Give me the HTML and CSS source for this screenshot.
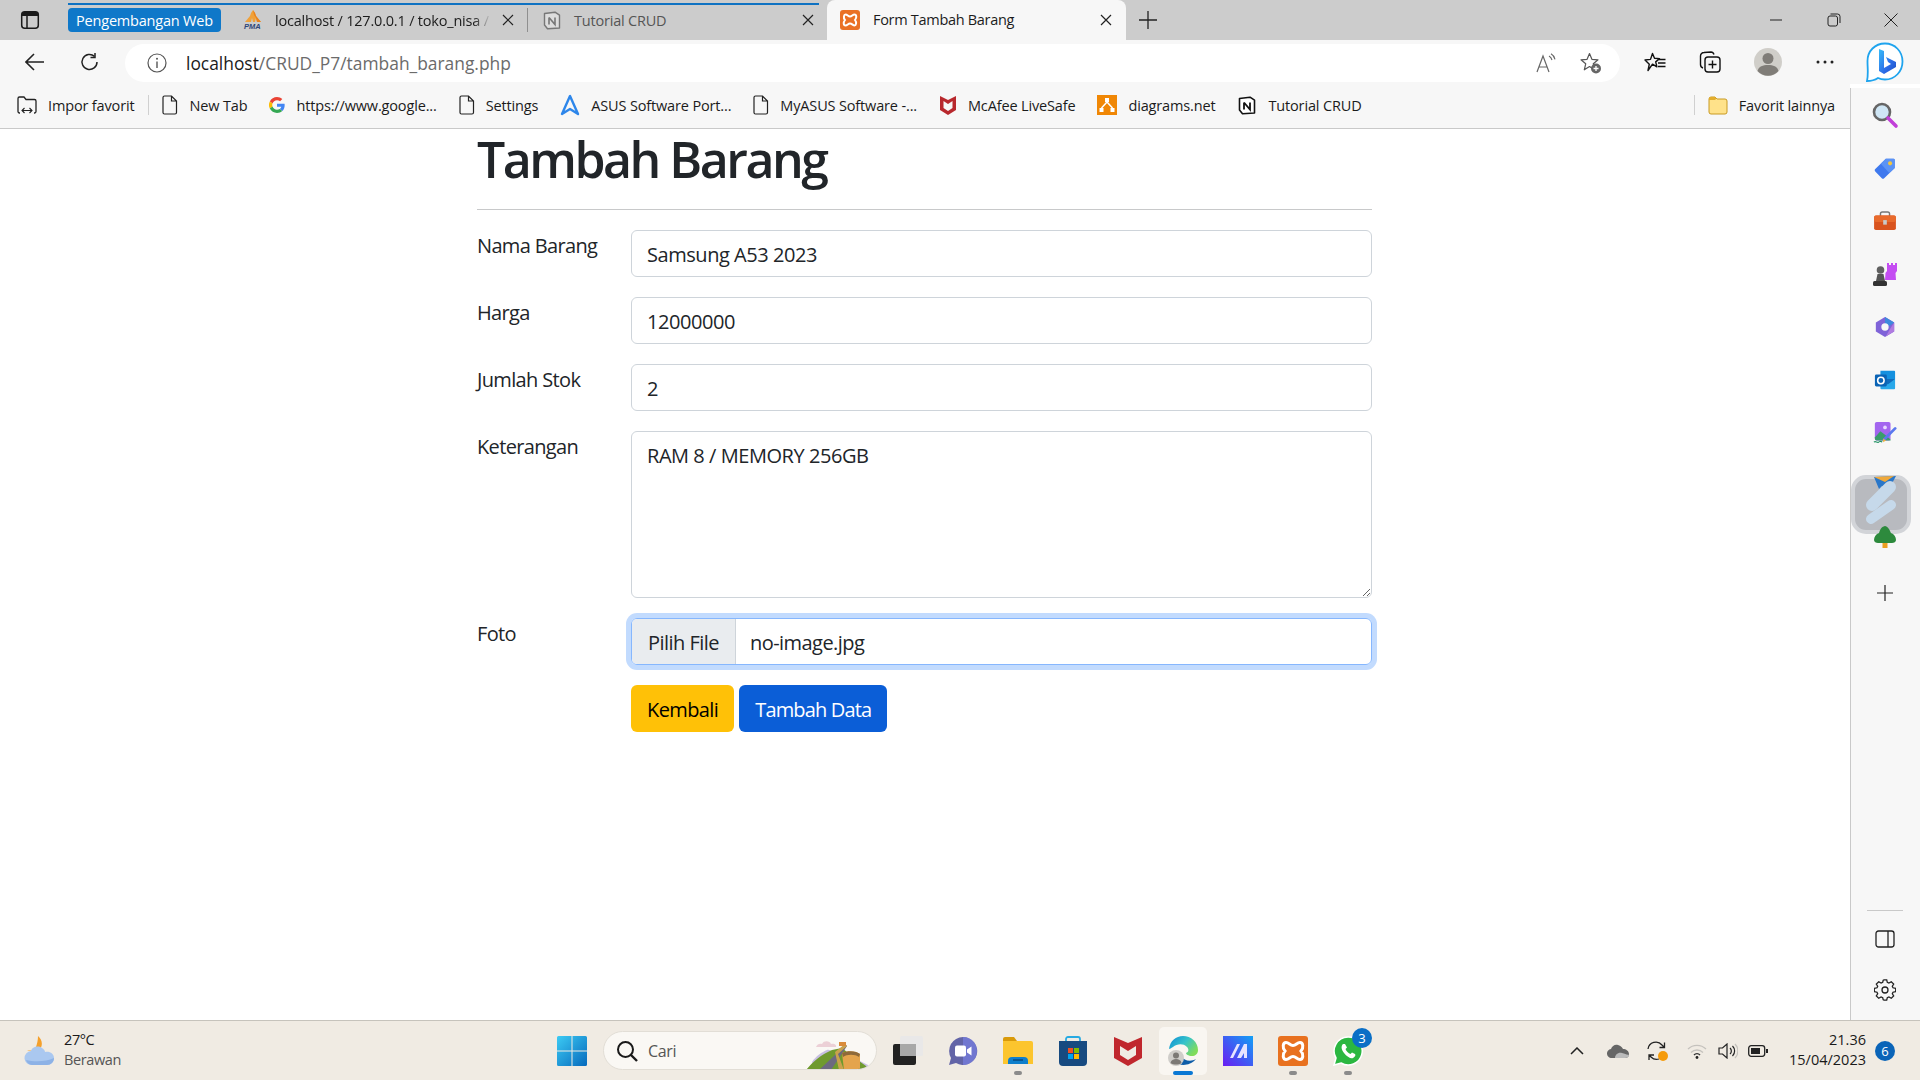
FILE: index.html
```html
<!DOCTYPE html>
<html lang="id">
<head>
<meta charset="utf-8">
<title>Form Tambah Barang</title>
<link rel="stylesheet" href="styles.css">
</head>
<body>
<div class="screen">
  <header class="tabbar">
    <div class="tab-toggle">
      <svg width="20" height="20" viewBox="0 0 20 20"><rect x="1.7" y="1.7" width="16.6" height="16.6" rx="3" fill="none" stroke="#1a1a1a" stroke-width="1.5"/><path d="M2 6V4a2 2 0 0 1 2-2h12a2 2 0 0 1 2 2v2z" fill="#1a1a1a"/><path d="M7 6v12" stroke="#1a1a1a" stroke-width="1.5"/></svg>
    </div>
    <div class="tab-group">
      <span class="group-chip">Pengembangan Web</span>
      <div class="tab tab-first">
        <svg class="fav" width="20" height="20" viewBox="0 0 20 20"><path d="M2 12L7 6l1-3 2-3 2 3 1 3 5 6h-4l-1-4-1 4h-2L9 8l-1 4z" fill="#f0a13a"/><path d="M10 0l2 3 1 3 5 6h-4l-1-4-2-3z" fill="#e9821c"/><text x="1" y="19" class="pma">PMA</text></svg>
        <span class="tab-title tab-fade">localhost / 127.0.0.1 / toko_nisa /</span>
        <svg class="close" width="12" height="12" viewBox="0 0 12 12"><path d="M1 1l10 10M11 1L1 11" stroke="#222" stroke-width="1.2"/></svg>
      </div>
      <div class="tab tab-second">
        <svg class="fav" width="20" height="20" viewBox="0 0 20 20"><path d="M2.5 3.5L13 2.2l4.5 3V18L5.5 18.8 2.5 15z" fill="#ddd" stroke="#777" stroke-width="1.4" stroke-linejoin="round"/><path d="M7 7.5v7M7 7.5l6 7v-7" fill="none" stroke="#777" stroke-width="1.6"/></svg>
        <span class="tab-title muted">Tutorial CRUD</span>
        <svg class="close" width="12" height="12" viewBox="0 0 12 12"><path d="M1 1l10 10M11 1L1 11" stroke="#222" stroke-width="1.2"/></svg>
      </div>
    </div>
    <div class="tab tab-active">
      <svg class="fav" width="20" height="20" viewBox="0 0 20 20"><rect width="20" height="20" rx="3" fill="#ea7125"/><path d="M5.5 4.5c2 0 2.500 2 4.500 2s2.500-2 4.500-2 2.500 3 .5 5.500c2 2.500 1 5.500-.5 5.500s-2.500-2-4.500-2-2.500 2-4.500 2-2.500-3-.5-5.500c-2-2.500-1-5.500.5-5.500z" fill="none" stroke="#fff" stroke-width="2"/></svg>
      <span class="tab-title">Form Tambah Barang</span>
      <svg class="close" width="12" height="12" viewBox="0 0 12 12"><path d="M1 1l10 10M11 1L1 11" stroke="#222" stroke-width="1.2"/></svg>
    </div>
    <svg class="newtab" width="18" height="18" viewBox="0 0 18 18"><path d="M9 0v18M0 9h18" stroke="#222" stroke-width="1.3"/></svg>
    <div class="winctl">
      <svg width="14" height="14" viewBox="0 0 14 14"><path d="M1 7h12" stroke="#222" stroke-width="1"/></svg>
      <svg width="14" height="14" viewBox="0 0 14 14"><rect x="1" y="3" width="9.500" height="10" rx="2" fill="none" stroke="#222"/><path d="M3.500 1h7a2.500 2.500 0 0 1 2.500 2.500V10" fill="none" stroke="#222"/></svg>
      <svg width="14" height="14" viewBox="0 0 14 14"><path d="M.5.5l13 13M13.500.5l-13 13" stroke="#222" stroke-width="1"/></svg>
    </div>
  </header>

  <div class="toolbar">
    <svg class="tool-back" width="20" height="18" viewBox="0 0 20 18"><path d="M9 1L1 9l8 8M1 9h18" fill="none" stroke="#222" stroke-width="1.6"/></svg>
    <svg class="tool-reload" width="20" height="20" viewBox="0 0 20 20"><path d="M17 10a7.500 7.500 0 1 1-2.500-5.600" fill="none" stroke="#222" stroke-width="1.500"/><path d="M15 1v4.500h-4.500" fill="none" stroke="#222" stroke-width="1.500"/></svg>
    <div class="address">
      <svg width="20" height="20" viewBox="0 0 20 20"><circle cx="10" cy="10" r="9" fill="none" stroke="#555" stroke-width="1.200"/><path d="M10 8.500V15" stroke="#555" stroke-width="1.400"/><circle cx="10" cy="5.800" r="1" fill="#555"/></svg>
      <span class="url"><span class="url-host">localhost</span>/CRUD_P7/tambah_barang.php</span>
      <svg class="addr-read" width="20" height="20" viewBox="0 0 20 20"><path d="M1 19L7 3l6 16M3 14h8" fill="none" stroke="#666" stroke-width="1.200"/><path d="M13 3c1.500.8 2.500 2.200 3 4M15 .8c2 1.200 3.500 3 4 5.500" fill="none" stroke="#666" stroke-width="1.100"/></svg>
      <svg class="addr-star" width="22" height="22" viewBox="0 0 22 22"><path d="M9.500 1.500l2.400 5.800 6.100.5-4.700 4 1.400 6-5.200-3.200-5.200 3.200 1.400-6L1 7.800l6.100-.5z" fill="none" stroke="#555" stroke-width="1.200" stroke-linejoin="round"/><circle cx="16" cy="16.500" r="5" fill="#666"/><path d="M16 14v5M13.500 16.500h5" stroke="#fff" stroke-width="1.300"/></svg>
    </div>
    <svg class="tool-favs" width="22" height="20" viewBox="0 0 22 20"><path d="M8.500 1.500l2 4.700 5 .4-3.800 3.300 1.200 5-4.400-2.700L4 18.500l1.300-6.300L1 8l5.500-.6z" fill="none" stroke="#111" stroke-width="1.400" stroke-linejoin="round"/><path d="M15 7.500h6.500M14 11h7.500M14 14.500h7.500" stroke="#111" stroke-width="1.300"/></svg>
    <svg class="tool-coll" width="22" height="22" viewBox="0 0 22 22"><path d="M4 17c-1.500-.5-2.500-2-2.500-3.500V5A3.500 3.500 0 0 1 5 1.500l7-.5c1.500 0 2.500 1 3 2.500" fill="none" stroke="#111" stroke-width="1.400"/><rect x="6" y="6" width="15" height="15" rx="3" fill="none" stroke="#111" stroke-width="1.400"/><path d="M13.500 9.500v8M9.500 13.500h8" stroke="#111" stroke-width="1.400"/></svg>
    <svg class="tool-profile" width="28" height="28" viewBox="0 0 28 28"><circle cx="14" cy="14" r="14" fill="#d0cec9"/><circle cx="14" cy="10.500" r="5.500" fill="#807d78"/><path d="M3.500 23c1-4.500 5.500-6 10.500-6s9.500 1.500 10.500 6a14 14 0 0 1-21 0z" fill="#807d78"/></svg>
    <svg class="tool-more" width="18" height="4" viewBox="0 0 18 4"><circle cx="2" cy="2" r="1.500" fill="#222"/><circle cx="9" cy="2" r="1.500" fill="#222"/><circle cx="16" cy="2" r="1.500" fill="#222"/></svg>
    <svg class="tool-bing" width="38" height="42" viewBox="0 0 38 42"><defs><linearGradient id="bingG" x1="0" y1="0" x2="1" y2="1"><stop offset="0" stop-color="#37bdf8"/><stop offset=".6" stop-color="#2c6ce8"/><stop offset="1" stop-color="#1e4ec2"/></linearGradient></defs><path d="M19 1.500C9 1.500 1.500 9 1.500 19c0 7 1 14-.5 20 4 0 8-1 11-3 2 1 4 1.500 7 1.500 10 0 17.500-8 17.500-18S29 1.500 19 1.500z" fill="#fff" stroke="#1fa4ee" stroke-width="1.800"/><path d="M13 7l5 2v17l7-4-3-2-2-5 10 5v5l-12 7-5-3z" fill="url(#bingG)"/></svg>
  </div>

  <div class="workspace">
    <div class="viewport">
      <nav class="bookmarks">
        <a class="bm"><svg width="20" height="20" viewBox="0 0 20 20"><path d="M3 18h-.5A1.500 1.500 0 0 1 1 16.500V3.500A1.500 1.500 0 0 1 2.500 2H7l2 2.500h8.500A1.500 1.500 0 0 1 19 6v10.500a1.500 1.500 0 0 1-1.500 1.500H17" fill="none" stroke="#222" stroke-width="1.300"/><path d="M5 15.500h10M7.500 13l-2.500 2.500L7.500 18M12.500 13l2.500 2.500-2.500 2.500" fill="none" stroke="#222" stroke-width="1.100"/></svg><span>Impor favorit</span></a>
        <i class="bm-sep"></i>
        <a class="bm"><svg width="16" height="20" viewBox="0 0 16 20"><path d="M2.500 1h7l5 5v11.500a1.500 1.500 0 0 1-1.500 1.500H2.500A1.500 1.500 0 0 1 1 17.500v-15A1.500 1.500 0 0 1 2.500 1zM9.500 1v5h5" fill="none" stroke="#222" stroke-width="1.200"/></svg><span>New Tab</span></a>
        <a class="bm"><svg width="16" height="16" viewBox="0 0 48 48"><path fill="#EA4335" d="M24 9.500c3.500 0 6.700 1.300 9.200 3.500l6.800-6.800C35.800 2.400 30.300 0 24 0 14.600 0 6.500 5.400 2.600 13.200l8 6.200C12.400 13.700 17.700 9.500 24 9.500z"/><path fill="#4285F4" d="M47 24.500c0-1.600-.1-3.100-.4-4.500H24v9h13c-.6 3-2.200 5.500-4.700 7.200l7.700 6C44.400 37.700 47 31.700 47 24.500z"/><path fill="#FBBC05" d="M10.500 28.600a14.500 14.500 0 0 1 0-9.200l-8-6.200a24 24 0 0 0 0 21.600z"/><path fill="#34A853" d="M24 48c6.500 0 11.900-2.100 15.900-5.800l-7.700-6c-2.200 1.500-5 2.300-8.200 2.300-6.300 0-11.600-4.200-13.500-9.900l-8 6.200C6.500 42.600 14.600 48 24 48z"/></svg><span>https://www.google...</span></a>
        <a class="bm"><svg width="16" height="20" viewBox="0 0 16 20"><path d="M2.500 1h7l5 5v11.500a1.500 1.500 0 0 1-1.500 1.500H2.500A1.500 1.500 0 0 1 1 17.500v-15A1.500 1.500 0 0 1 2.500 1zM9.500 1v5h5" fill="none" stroke="#222" stroke-width="1.200"/></svg><span>Settings</span></a>
        <a class="bm"><svg width="20" height="22" viewBox="0 0 20 22"><path d="M10 2L2 20l8-5 8 5z" fill="none" stroke="#2d86ea" stroke-width="2.400" stroke-linejoin="round"/></svg><span>ASUS Software Port...</span></a>
        <a class="bm"><svg width="16" height="20" viewBox="0 0 16 20"><path d="M2.500 1h7l5 5v11.500a1.500 1.500 0 0 1-1.500 1.500H2.500A1.500 1.500 0 0 1 1 17.500v-15A1.500 1.500 0 0 1 2.500 1zM9.500 1v5h5" fill="none" stroke="#222" stroke-width="1.200"/></svg><span>MyASUS Software -...</span></a>
        <a class="bm"><svg width="18" height="20" viewBox="0 0 18 20"><path d="M1 1l8 4 8-4v14l-8 5-8-5zM4.500 6v7l4.500 3 4.500-3V6L9 9z" fill="#b8282d" fill-rule="evenodd"/></svg><span>McAfee LiveSafe</span></a>
        <a class="bm"><svg width="20" height="20" viewBox="0 0 20 20"><rect width="20" height="20" fill="#f08705"/><path d="M8 3h4v4H8zM2.500 13h4v4h-4zM13.500 13h4v4h-4z" fill="#fff"/><path d="M10 7l-5.500 6M10 7l5.500 6" stroke="#fff" stroke-width="1.500"/></svg><span>diagrams.net</span></a>
        <a class="bm"><svg width="20" height="20" viewBox="0 0 20 20"><path d="M2.500 3.500L13 2.200l4.500 3V18L5.500 18.800 2.500 15z" fill="#fff" stroke="#111" stroke-width="1.600" stroke-linejoin="round"/><path d="M7 7.500v7M7 7.500l6 7v-7" fill="none" stroke="#111" stroke-width="1.800"/></svg><span>Tutorial CRUD</span></a>
        <i class="bm-sep bm-sep-right"></i>
        <a class="bm"><svg width="20" height="20" viewBox="0 0 20 20"><path d="M1 4a2 2 0 0 1 2-2h4l2 2h8a2 2 0 0 1 2 2v11a2 2 0 0 1-2 2H3a2 2 0 0 1-2-2z" fill="#ffe28a" stroke="#c89a22"/><path d="M1 4a2 2 0 0 1 2-2h4l1.500 1.500L7 5H1z" fill="#e3ad2d"/></svg><span>Favorit lainnya</span></a>
      </nav>

      <main class="page">
        <div class="container">
          <h1 class="title">Tambah Barang</h1>
          <hr class="rule">
          <form class="form-grid">
            <label class="form-label">Nama Barang</label>
            <input class="control" type="text" value="Samsung A53 2023">
            <label class="form-label">Harga</label>
            <input class="control" type="text" value="12000000">
            <label class="form-label">Jumlah Stok</label>
            <input class="control" type="text" value="2">
            <label class="form-label">Keterangan</label>
            <textarea class="control control-area">RAM 8 / MEMORY 256GB</textarea>
            <label class="form-label">Foto</label>
            <div class="file-control">
              <span class="file-btn">Pilih File</span>
              <span class="file-name">no-image.jpg</span>
            </div>
            <div class="form-actions">
              <button class="btn btn-warning" type="button">Kembali</button>
              <button class="btn btn-primary" type="button">Tambah Data</button>
            </div>
          </form>
        </div>
      </main>
    </div>

    <aside class="sidebar">
      <div class="side-icon"><svg width="28" height="28" viewBox="0 0 28 28"><circle cx="11" cy="11" r="8" fill="#cfe6f5" stroke="#666" stroke-width="2.600"/><path d="M17 17l8 8" stroke="#c13fd8" stroke-width="3.600" stroke-linecap="round"/></svg></div>
      <div class="side-icon"><svg width="22" height="22" viewBox="0 0 26 26"><path d="M14 2h9a1.500 1.500 0 0 1 1.500 1.500V13L12 25a2 2 0 0 1-2.800 0L1.500 17a2 2 0 0 1 0-2.800z" fill="#3f79ee"/><path d="M14 2h9a1.500 1.500 0 0 1 1.500 1.500V13L18 19 8 8z" fill="#5b93f5"/><circle cx="19" cy="7.500" r="2.400" fill="#f5c63a"/></svg></div>
      <div class="side-icon"><svg width="24" height="20" viewBox="0 0 26 22"><path d="M8 6V3a2 2 0 0 1 2-2h6a2 2 0 0 1 2 2v3" fill="none" stroke="#777" stroke-width="1.600"/><rect x="1" y="5" width="24" height="16" rx="2" fill="#d9531e"/><rect x="1" y="5" width="24" height="7" rx="2" fill="#e86a2c"/><rect x="11" y="10" width="4" height="5" fill="#c9c9c9"/></svg></div>
      <div class="side-icon"><svg width="24" height="24" viewBox="0 0 24 24"><path d="M14 1h2v2h2V1h2v2h2V1h2v8l-1.500 2 .5 7H12l.5-7L14 9z" fill="#c44df2"/><circle cx="7.500" cy="8" r="3.800" fill="#606060"/><path d="M4.500 12h6l1.500 7H3z" fill="#555"/><rect y="19" width="14" height="5" rx="1.500" fill="#333"/></svg></div>
      <div class="side-icon"><svg width="22" height="22" viewBox="0 0 24 24"><path d="M12 1l10 6v10l-10 6-10-6V7z" fill="#7f63d8"/><path d="M12 1l10 6-5 4-5-3z" fill="#3e89dd"/><path d="M22 7v10l-9 5 4-7z" fill="#b07be0"/><circle cx="12" cy="12" r="4" fill="#f7f7f7"/></svg></div>
      <div class="side-icon"><svg width="22" height="22" viewBox="0 0 24 24"><path d="M7 2h15a1 1 0 0 1 1 1v8H7z" fill="#1490df"/><path d="M7 11h16v10a1 1 0 0 1-1 1H8a1 1 0 0 1-1-1z" fill="#28a8ea"/><path d="M7 11l8 6 8-6" fill="#0f6cbd"/><rect x="1" y="6" width="13" height="13" rx="1.500" fill="#0a63b5"/><circle cx="7.500" cy="12.500" r="3.500" fill="none" stroke="#fff" stroke-width="1.700"/></svg></div>
      <div class="side-icon"><svg width="24" height="24" viewBox="0 0 26 26"><rect x="2" y="1" width="17" height="20" rx="2" fill="#a366ef"/><path d="M2 18l6-7 5 4 6 5v1H4a2 2 0 0 1-2-2z" fill="#3a9d6b"/><circle cx="13" cy="7" r="2" fill="#e9d9ff"/><path d="M24 8L12 20" stroke="#5b78ef" stroke-width="3" stroke-linecap="round"/><path d="M11 19l3 2-3 2z" fill="#f2b33d"/><path d="M1 23c2-2 3 1 5 0s2-2 4 0" fill="none" stroke="#249464" stroke-width="1.200"/></svg></div>
      <div class="side-tile">
        <span class="tile-bg"></span>
        <svg class="tile-art" width="52" height="74" viewBox="0 0 52 74"><path d="M19 2l22-1-7 13-7-3-3 3z" fill="#2a77c9"/><path d="M19 2l20-1-9 6z" fill="#f0a93b"/><path d="M17 30l18-18" stroke="#c6d9ea" stroke-width="12" stroke-linecap="round"/><path d="M16 44l20-14" stroke="#c6d9ea" stroke-width="10" stroke-linecap="round"/><path d="M30 51c4 1 5 5 6 7 3 1 5 4 5 7 0 2-2 3-4 3H23c-2 0-4-1-4-3 0-3 2-6 5-7 1-3 2-6 6-7z" fill="#2d8a3d"/><rect x="27.500" y="68" width="5" height="5" fill="#eba021"/></svg>
      </div>
      <div class="side-plus"><svg width="16" height="16" viewBox="0 0 16 16"><path d="M8 0v16M0 8h16" stroke="#222" stroke-width="1.200"/></svg></div>
      <div class="side-foot">
        <i class="side-div"></i>
        <svg width="20" height="18" viewBox="0 0 20 18"><rect x="1" y="1" width="18" height="16" rx="2.500" fill="none" stroke="#222" stroke-width="1.300"/><path d="M13 1v16" stroke="#222" stroke-width="1.300"/></svg>
        <svg width="22" height="22" viewBox="0 0 22 22"><circle cx="11" cy="11" r="3" fill="none" stroke="#222" stroke-width="1.300"/><path d="M9.300 1.500h3.400l.6 2.700 1.600.7 2.400-1.400 2.400 2.400-1.400 2.400.7 1.600 2.700.6v3.400l-2.700.6-.7 1.600 1.400 2.400-2.400 2.400-2.400-1.400-1.600.7-.6 2.700H9.300" transform="translate(0 -.6) scale(1 .95)" fill="none" stroke="#222" stroke-width="1.300"/><path d="M9.300 1.500l-.6 2.700-1.600.7-2.400-1.400-2.400 2.400 1.400 2.400-.7 1.600-2.700.6v3.400l2.700.6.7 1.600-1.400 2.400 2.400 2.400 2.400-1.400 1.600.7.600 2.700" transform="translate(0 -.6) scale(1 .95)" fill="none" stroke="#222" stroke-width="1.300"/></svg>
      </div>
    </aside>
  </div>

  <footer class="taskbar">
    <div class="weather">
      <svg width="32" height="30" viewBox="0 0 32 30"><path d="M14 0c5 4 5 11 1 14H3c3 1 7 1 9-3 1-3 2-7 2-11z" fill="#f4a02c"/><path d="M8 29a7 7 0 0 1-1-14c1-4 7-6 11-3 2 1 3 3 3 4 5-1 9 2 9 6s-3 7-7 7z" fill="#aac8f0"/><path d="M8 29a7 7 0 0 1-6-5c8 2 20 2 28-2 0 4-3 7-7 7z" fill="#8db2e6"/></svg>
      <div class="weather-text"><span class="temp">27°C</span><span class="cond">Berawan</span></div>
    </div>
    <div class="task-center">
      <svg class="start" width="30" height="30" viewBox="0 0 30 30"><defs><linearGradient id="winG" x1="0" y1="0" x2="1" y2="1"><stop offset="0" stop-color="#3ccbf4"/><stop offset="1" stop-color="#0669bc"/></linearGradient></defs><path d="M0 1.500A1.500 1.500 0 0 1 1.500 0h13v14.400H0zM15.500 0h13A1.500 1.500 0 0 1 30 1.500v12.900H15.500zM0 15.400h14.500V30h-13A1.500 1.500 0 0 1 0 28.500zM15.500 15.400H30v13.100a1.500 1.500 0 0 1-1.500 1.500h-13z" fill="url(#winG)"/></svg>
      <div class="searchbox">
        <svg width="22" height="22" viewBox="0 0 22 22"><circle cx="9.500" cy="9.500" r="7.500" fill="none" stroke="#1a1a1a" stroke-width="2"/><path d="M15 15l6 6" stroke="#1a1a1a" stroke-width="2.400"/></svg>
        <span>Cari</span>
        <svg class="search-art" width="72" height="39" viewBox="0 0 72 39"><path d="M12 15c1-3 4-4 6-3 2-4 8-3 9 0 3-1 6 1 5 3z" fill="#ecd0d6"/><path d="M8 30c4-6 10-10 15-12 2-1 6 2 8 2l13 3 14 7 8 4-2 4H10z" fill="#c7bfe0"/><path d="M2 38c6-7 14-15 26-20l10-2 10 8 14 10 4 4z" fill="#6f9a2e"/><path d="M15 38L30 24l11-12 2 2L27 38z" fill="#6c6a80"/><path d="M35 38L31 20l10-8 2 2-9 8 6 16z" fill="#c9a24d"/><path d="M35 10h7v4h-7z" fill="#d98b3a"/><path d="M38 21c6-3 15-2 18 1v16H40z" fill="#e4a44c"/><path d="M38 21c6-3 15-2 18 1l-1 3c-4-3-12-3-16 0z" fill="#8e6a3a"/></svg>
      </div>
      <div class="apps">
        <div class="app"><svg width="30" height="29" viewBox="0 0 30 29"><rect y="8" width="23" height="21" rx="2" fill="#222"/><rect x="7" width="23" height="20" rx="1.500" fill="#e8e8e8" fill-opacity=".9"/><rect x="7" y="8" width="16" height="12" fill="#a8a8a8"/></svg></div>
        <div class="app"><svg width="30" height="30" viewBox="0 0 30 30"><path d="M15 1a14 14 0 1 1-7 26l-7 2 2-7A14 14 0 0 1 15 1z" fill="#6264a7"/><path d="M15 1a14 14 0 0 1 0 28z" fill="#7b83eb" fill-opacity=".6"/><rect x="7" y="9.500" width="11" height="11" rx="2" fill="#fff"/><path d="M19 13.500l4.500-3v9l-4.500-3z" fill="#fff"/></svg></div>
        <div class="app app-running"><svg width="30" height="27" viewBox="0 0 30 27"><path d="M0 2a2 2 0 0 1 2-2h9l3 4H0z" fill="#d99a0a"/><path d="M0 4h28a2 2 0 0 1 2 2v21H0z" fill="#fcc52e"/><path d="M5 27v-3a4 4 0 0 1 4-4h12a4 4 0 0 1 4 4v3z" fill="#0f7fcc"/><path d="M10 23h10" stroke="#063d6e" stroke-width="1.200"/></svg></div>
        <div class="app"><svg width="30" height="30" viewBox="0 0 30 30"><path d="M8 6V3a2 2 0 0 1 2-2h10a2 2 0 0 1 2 2v3" fill="none" stroke="#27aae2" stroke-width="1.800"/><path d="M1 5h28v21a4 4 0 0 1-4 4H5a4 4 0 0 1-4-4z" fill="#174a80"/><rect x="10" y="12" width="5" height="5" fill="#f25022"/><rect x="16" y="12" width="5" height="5" fill="#7fba00"/><rect x="10" y="18" width="5" height="5" fill="#00a4ef"/><rect x="16" y="18" width="5" height="5" fill="#ffb900"/></svg></div>
        <div class="app"><svg width="28" height="30" viewBox="0 0 28 30"><path d="M0 1l14 6 14-6v21l-14 8-14-8zM6 10v9l8 5 8-5v-9l-8 5z" fill="#c0272d" fill-rule="evenodd"/></svg></div>
        <div class="app app-edge">
          <svg width="30" height="30" viewBox="0 0 30 30"><defs><linearGradient id="edgeA" x1="0" y1="0" x2="1" y2=".6"><stop offset="0" stop-color="#0c8bd6"/><stop offset=".55" stop-color="#37c4c9"/><stop offset="1" stop-color="#7fdc5a"/></linearGradient></defs><path d="M1 13C2 5 8 0 15 0c8 0 15 6 15 14 0 4-3 6-6 6-4 0-6-2-6-3 3-1 3-4 1-6-4-4-10-3-14 0-2 1-3 2-4 2z" fill="url(#edgeA)"/><path d="M11 28c4 2 12 1 17-5-5 3-12 2-15-3-1-1-2 3-2 8z" fill="#0e5da8"/><circle cx="8" cy="22" r="8" fill="#cfcdc9"/><circle cx="8" cy="19.500" r="3" fill="#7c7975"/><path d="M2.500 27c.5-3 3-4 5.500-4s5 1 5.500 4c-3 2-8 2-11 0z" fill="#7c7975"/></svg>
          <i class="app-active"></i>
        </div>
        <div class="app"><svg width="30" height="30" viewBox="0 0 30 30"><defs><linearGradient id="maG" x1="0" y1="1" x2="1" y2="0"><stop offset="0" stop-color="#6a1cf2"/><stop offset="1" stop-color="#12a0f5"/></linearGradient></defs><rect width="30" height="30" fill="url(#maG)"/><path d="M7 22L14 8h3L10 22zM14 22l7-14h3v14h-3v-5l-3 5z" fill="#e7e4ff"/></svg></div>
        <div class="app app-running"><svg width="30" height="30" viewBox="0 0 30 30"><rect width="30" height="30" rx="3" fill="#e8711f"/><path d="M8 6.500c3 0 4 3 7 3s4-3 7-3 4 5 1 8.500c3 3.500 2 8.500-1 8.500s-4-3-7-3-4 3-7 3-4-5-1-8.500c-3-3.500-2-8.500 1-8.500z" fill="none" stroke="#fff" stroke-width="3"/></svg></div>
        <div class="app app-running app-wa">
          <svg width="30" height="30" viewBox="0 0 30 30"><path d="M15 1a14 14 0 1 1-7 26l-7 2 2-7A14 14 0 0 1 15 1z" fill="#2bb741" stroke="#fff" stroke-width="1.500"/><path d="M10 8c-2 2-2 5 1 9s7 6 9 5 3-3 2-4l-3-1.500-1.500 1.500c-2-.5-4.500-3-5-5L14 11.500 12 8z" fill="#fff"/></svg>
          <span class="count">3</span>
        </div>
      </div>
    </div>
    <div class="tray">
      <svg width="14" height="8" viewBox="0 0 14 8"><path d="M1 7l6-6 6 6" fill="none" stroke="#222" stroke-width="1.500"/></svg>
      <svg class="tr-cloud" width="22" height="14" viewBox="0 0 22 14"><path d="M5 14a4.500 4.500 0 0 1-1-9c1-3 4-5 7-4s4 2 5 4c3 0 6 2 6 5s-2 4-4 4z" fill="#666"/><path d="M8 14c0-3 3-6 7-5s6 2 7 2c0 2-2 3-4 3z" fill="#bbb"/></svg>
      <svg class="tr-sync" width="22" height="22" viewBox="0 0 22 22"><path d="M1 9a8 8 0 0 1 14-4l2.500 2.500M17.500 2.500v5h-5" fill="none" stroke="#222" stroke-width="1.300"/><path d="M12 19a8 8 0 0 1-8-2l-2-2M2 20v-5h5" fill="none" stroke="#222" stroke-width="1.300"/><circle cx="16" cy="16" r="5" fill="#f59b0b"/></svg>
      <svg class="tr-wifi" width="20" height="16" viewBox="0 0 20 16"><path d="M1 6a13 13 0 0 1 18 0M4 9.500a8.500 8.500 0 0 1 12 0" fill="none" stroke="#c5c2bd" stroke-width="1.300"/><path d="M7 12a4 4 0 0 1 6 0" fill="none" stroke="#333" stroke-width="1.400"/><circle cx="10" cy="14.500" r="1.400" fill="#222"/></svg>
      <svg class="tr-vol" width="20" height="16" viewBox="0 0 20 16"><path d="M1 5h3.500L9 1v14l-4.500-4H1z" fill="none" stroke="#222" stroke-width="1.200"/><path d="M12 5a4 4 0 0 1 0 6M14.500 3a7 7 0 0 1 0 10" fill="none" stroke="#222" stroke-width="1.200"/><path d="M17 1a10 10 0 0 1 0 14" fill="none" stroke="#c5c2bd" stroke-width="1.200"/></svg>
      <svg class="tr-batt" width="20" height="12" viewBox="0 0 20 12"><rect x=".7" y=".7" width="16" height="10.600" rx="2.500" fill="none" stroke="#222" stroke-width="1.300"/><rect x="3" y="3" width="9" height="6" fill="#222"/><rect x="18" y="4" width="2" height="4" fill="#222"/></svg>
      <div class="clock"><span>21.36</span><span>15/04/2023</span></div>
      <span class="notif">6</span>
    </div>
  </footer>
</div>
</body>
</html>
```

FILE: styles.css
```css
* { box-sizing: border-box; }
html, body { margin: 0; height: 100%; }
body { font-family: "Open Sans", "Noto Sans", sans-serif; color: #212529; overflow: hidden; background: #fff; }
.screen { width: 1920px; height: 1080px; display: flex; flex-direction: column; }
svg { flex: none; display: block; }

/* tab strip */
.tabbar { height: 40px; flex: none; background: #cccccc; display: flex; align-items: flex-start; font-size: 14.5px; letter-spacing: -.2px; }
.tab-toggle { width: 68px; height: 40px; padding-left: 20px; display: flex; align-items: center; }
.tab-group { width: 751px; height: 35px; margin-top: 3px; border-top: 2px solid #0f72c2; display: flex; align-items: flex-start; }
.group-chip { width: 153px; height: 24px; margin-top: 3px; background: #0f78c9; border-radius: 4px; color: #fff; display: flex; align-items: center; justify-content: center; }
.tab { display: flex; align-items: center; height: 30px; }
.tab-first { width: 307px; padding: 0 0 0 22px; position: relative; }
.tab-second { flex: 1; padding: 0 5px 0 14px; }
.tab-first::after { content: ""; position: absolute; right: 0; top: 3px; height: 24px; width: 1px; background: #8f8f8f; }
.tab-first .tab-title { width: 216px; margin-left: 12px; white-space: nowrap; }
.tab-first .close { margin-left: 11px; }
.tab-fade { -webkit-mask-image: linear-gradient(90deg, #000 92%, transparent 100%); mask-image: linear-gradient(90deg, #000 92%, transparent 100%); }
.tab-title { color: #1c1c1c; }
.tab-title.muted { color: #555; margin-left: 12px; flex: 1; }
.tab-active { width: 299px; height: 44px; margin: 0 0 0 8px; padding: 0 14px 5px 13px; background: #f7f7f7; border-radius: 8px 8px 0 0; position: relative; z-index: 1; }
.tab-active .tab-title { flex: 1; margin-left: 13px; letter-spacing: -.3px; }
.pma { font: italic 700 7.5px "Liberation Sans", sans-serif; fill: #2f4678; letter-spacing: 0; }
.newtab { margin: 11px 0 0 13px; }
.winctl { margin-left: auto; width: 129px; margin-right: 22px; margin-top: 13px; display: flex; justify-content: space-between; }

/* toolbar */
.toolbar { height: 44px; flex: none; background: #f7f7f7; display: flex; align-items: center; padding-left: 25px; }
.tool-reload { margin-left: 35px; }
.address { width: 1495px; height: 38px; margin: 1px 0 0 25px; background: #fff; border-radius: 19px; display: flex; align-items: center; padding: 0 18px 0 22px; }
.url { margin-left: 19px; font-size: 17.4px; letter-spacing: 0; color: #6b6b6b; flex: 1; }
.url-host { color: #1b1b1b; }
.addr-star { margin-left: 24px; }
.tool-favs { margin-left: 24px; }
.tool-coll { margin-left: 33px; }
.tool-profile { margin-left: 33px; }
.tool-more { margin-left: 34px; }
.tool-bing { margin-left: 32px; margin-top: 2px; }

/* below toolbar */
.workspace { flex: 1; min-height: 0; display: flex; }
.viewport { width: 1850px; display: flex; flex-direction: column; }
.bookmarks { height: 45px; flex: none; background: #f7f7f7; border-bottom: 1px solid #c9c9c9; display: flex; align-items: center; padding: 0 0 2px 17px; gap: 22px; font-size: 14.5px; letter-spacing: -.15px; color: #1b1b1b; }
.bm { display: flex; align-items: center; gap: 11px; white-space: nowrap; }
.bm-sep { width: 1px; height: 20px; background: #d0d0d0; margin: 0 -8.5px; }
.bm-sep-right { margin: 0 -9px 0 auto; }
.bookmarks .bm:last-child { margin-right: 15px; }

/* page */
.page { flex: 1; background: #fff; }
.container { width: 895px; margin: 0 0 0 477px; }
.title { margin: 0; padding-top: 1px; font-size: 50px; line-height: 59px; font-weight: 600; letter-spacing: -2.5px; }
.rule { margin: 20px 0; border: 0; border-top: 1px solid #c8c9ca; }
.form-grid { display: grid; grid-template-columns: 154px 1fr; gap: 20px 0; font-size: 20px; letter-spacing: -.55px; }
.form-label { line-height: 30px; padding-top: 1px; letter-spacing: -.65px; }
.control { display: block; width: 100%; height: 47px; padding: 8.5px 15px 6.5px; border: 1px solid #ced4da; border-radius: 6px; font: inherit; letter-spacing: -.45px; color: #212529; background: #fff; line-height: 30px; }
.control-area { height: 167px; resize: vertical; margin: 0; }
.file-control { height: 47px; display: flex; align-items: stretch; border: 1px solid #86b7fe; border-radius: 6px; box-shadow: 0 0 0 5px #c2dbfe; overflow: hidden; }
.file-btn { width: 104px; padding-top: 2px; background: #e9ecef; border-right: 1px solid #ced4da; display: flex; align-items: center; justify-content: center; }
.file-name { padding: 2px 0 0 14px; display: flex; align-items: center; }
.form-actions { grid-column: 2; display: flex; gap: 5px; }
.btn { height: 47px; padding: 2px 15px 0; border: 1px solid transparent; border-radius: 6px; font: inherit; }
.btn-warning { background: #ffc107; color: #000; letter-spacing: -.6px; }
.btn-primary { background: #0b5ed7; color: #fff; letter-spacing: -.85px; }

/* side rail */
.sidebar { width: 70px; margin-top: 4px; background: #f7f7f7; border-left: 1px solid #c9c9c9; display: flex; flex-direction: column; align-items: center; }
.side-icon { height: 53px; width: 100%; display: flex; align-items: center; justify-content: center; flex: none; padding-right: 2px; }
.side-tile { width: 60px; height: 59px; margin: 16px 9px 0 0; position: relative; flex: none; }
.tile-bg { display: block; width: 100%; height: 100%; background: #b8babf; border: 4px solid #d2d4d8; border-radius: 15px; }
.tile-art { position: absolute; left: 4px; top: 0; }
.side-plus { margin: 51px 2px 0 0; flex: none; }
.side-foot { margin-top: auto; height: 110px; width: 100%; padding-right: 2px; display: flex; flex-direction: column; align-items: center; }
.side-div { width: 36px; height: 1px; background: #c9c9c9; }
.side-foot svg:nth-of-type(1) { margin-top: 19px; }
.side-foot svg:nth-of-type(2) { margin-top: 31px; }

/* taskbar */
.taskbar { height: 60px; flex: none; background: #f0ebe3; border-top: 1px solid #c6c3bc; display: flex; align-items: center; }
.weather { width: 557px; padding-left: 24px; display: flex; align-items: center; gap: 8px; flex: none; }
.weather-text { display: flex; flex-direction: column; font-size: 14.5px; line-height: 20px; letter-spacing: -.4px; margin-top: -2px; }
.temp { color: #1a1a1a; }
.cond { color: #555; }
.task-center { display: flex; align-items: center; flex: none; }
.start { margin-right: 16px; }
.searchbox { width: 274px; height: 39px; background: #faf8f4; border: 1px solid #e2ded6; border-radius: 20px; display: flex; align-items: center; padding-left: 12px; gap: 10px; font-size: 16px; letter-spacing: -.3px; color: #555; position: relative; overflow: hidden; }
.search-art { position: absolute; right: 0; top: 0; }
.apps { display: flex; align-items: center; margin-left: 3px; }
.app { width: 55px; height: 48px; display: flex; align-items: center; justify-content: center; position: relative; flex: none; }
.app-running::after { content: ""; position: absolute; left: 50%; bottom: 0; width: 8px; height: 4px; margin-left: -4px; border-radius: 2px; background: #8b8b8b; }
.app-edge { background: #f9f6f1; border-radius: 5px; width: 48px; margin: 0 3px 0 4px; }
.app-active { position: absolute; left: 14px; bottom: 0; width: 20px; height: 4px; border-radius: 2px; background: #0a78d4; }
.count { position: absolute; right: 3px; top: 1px; width: 20px; height: 20px; border-radius: 50%; background: #0a6fc6; color: #fff; font-size: 13px; display: flex; align-items: center; justify-content: center; }
.tray { margin-left: auto; display: flex; align-items: center; padding-right: 25px; }
.tr-cloud { margin-left: 23px; }
.tr-sync { margin-left: 18px; }
.tr-wifi { margin-left: 18px; }
.tr-vol { margin-left: 11px; }
.tr-batt { margin-left: 10px; }
.clock { display: flex; flex-direction: column; align-items: flex-end; width: 98px; margin-top: -2px; font-size: 14.5px; line-height: 20px; letter-spacing: 0; color: #1a1a1a; }
.notif { width: 20px; height: 20px; margin-left: 9px; border-radius: 50%; background: #0a64b8; color: #fff; font-size: 13px; display: flex; align-items: center; justify-content: center; }
```
